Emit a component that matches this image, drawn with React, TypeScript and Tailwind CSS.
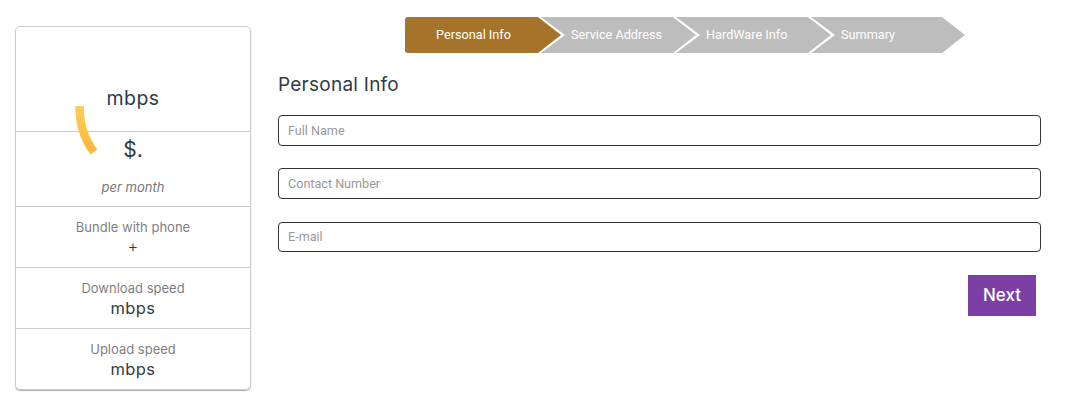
const steps = ['Personal Info', 'Service Address', 'HardWare Info', 'Summary'];
const heading = "font-['Inter','Open_Sans',sans-serif]";

function Stepper() {
  return (
    <div className="ml-[127px] flex h-[36px] font-['Roboto',sans-serif] text-[12.7px] text-white">
      {steps.map((label, i) =>
        i === 0 ? (
          <div
            key={label}
            className="flex w-[156px] items-center rounded-l-[3px] bg-[#a5732a] pl-[31px] [clip-path:polygon(0_0,calc(100%_-_23px)_0,100%_50%,calc(100%_-_23px)_100%,0_100%)]"
          >
            {label}
          </div>
        ) : (
          <div
            key={label}
            className={`-ml-[20px] flex items-center bg-[#bdbdbd] pl-[30px] [clip-path:polygon(0_0,calc(100%_-_23px)_0,100%_50%,calc(100%_-_23px)_100%,0_100%,24px_50%)] ${i === 3 ? 'w-[154px]' : 'w-[155px]'}`}
          >
            {label}
          </div>
        ),
      )}
    </div>
  );
}

function SpeedRow({ label, value, light }: { label: string; value: string; light?: boolean }) {
  return (
    <div className="flex h-[61px] flex-col items-center border-t border-[#ccc] pt-[11px]">
      <span className="text-[13px] leading-[18px] text-[#7f7f7f]">{label}</span>
      <span className={`text-[16.5px] tracking-[0.4px] text-[#333c44] ${light ? 'font-light leading-[20px]' : 'leading-[22px]'}`}>{value}</span>
    </div>
  );
}

function Field({ placeholder, className }: { placeholder: string; className: string }) {
  return (
    <input
      placeholder={placeholder}
      className={`block w-full rounded-[4px] border border-[#333] px-[9px] font-['Roboto',sans-serif] text-[12.6px] outline-none placeholder:text-[#999] ${className}`}
    />
  );
}

export default function App() {
  return (
    <div className="relative flex h-[417px] w-[1066px] overflow-hidden bg-white pl-[15px]">
      <div className={`mt-[26px] h-[364px] w-[236px] rounded-[5px] border border-[#ccc] shadow-[0_1px_1px_#aaa] ${heading}`}>
        <div className="flex h-[104px] items-end justify-center pb-[20px] text-[19.5px] leading-[26px] tracking-[0.4px] text-[#2f3b47]">mbps</div>
        <div className="flex h-[75px] flex-col items-center border-t border-[#ccc]">
          <span className="mt-[2px] text-[21px] leading-[32px] text-[#2f3b47]">$.</span>
          <span className="mt-[12px] text-[13px] italic leading-[18px] text-[#777]">per month</span>
        </div>
        <SpeedRow label="Bundle with phone" value="+" light />
        <SpeedRow label="Download speed" value="mbps" />
        <SpeedRow label="Upload speed" value="mbps" />
      </div>

      <div className="ml-[27px] w-[763px] pt-[17px]">
        <Stepper />
        <h2 className={`mt-[19px] text-[19px] leading-[26px] tracking-[0.25px] text-[#2f3b47] ${heading}`}>Personal Info</h2>
        <Field placeholder="Full Name" className="mt-[17px] h-[31px]" />
        <Field placeholder="Contact Number" className="mt-[22px] h-[31px]" />
        <Field placeholder="E-mail" className="mt-[23px] h-[30px] pb-[2px]" />
        <div className="mt-[23px] flex justify-end pr-[5px]">
          <button className={`h-[41px] w-[68px] bg-[#7b3fa5] text-[17px] font-medium text-white ${heading}`}>Next</button>
        </div>
      </div>

      {/* loading arc sitting over the card */}
      <svg className="absolute left-[70px] top-[100px]" width="32" height="60" viewBox="0 0 32 60" fill="none">
        <defs>
          <linearGradient id="arc" x1="0" y1="0" x2="0" y2="1">
            <stop offset="0" stopColor="#ffcc55" />
            <stop offset="1" stopColor="#f9ba3e" />
          </linearGradient>
        </defs>
        <path d="M9.5 6C9.5 24 14 39 24 52" stroke="url(#arc)" strokeWidth="8.5" />
      </svg>
    </div>
  );
}
